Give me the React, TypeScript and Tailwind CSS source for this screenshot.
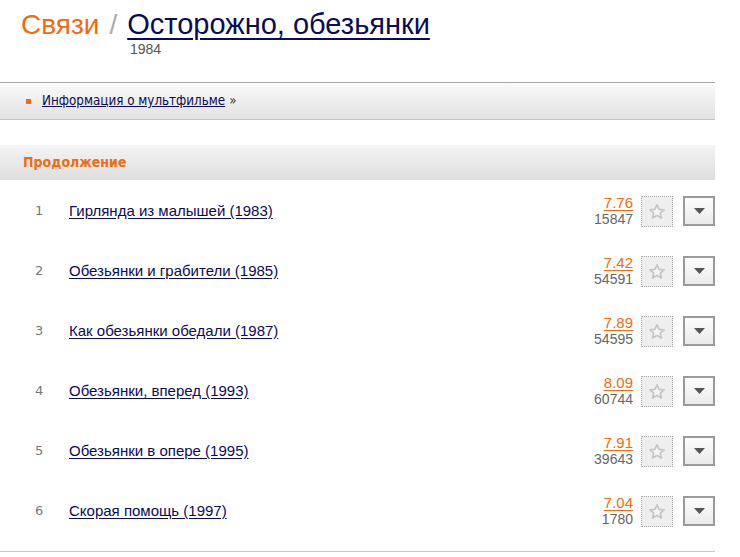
const rows = [
  { n: 1, title: "Гирлянда из малышей (1983)", rating: "7.76", votes: "15847" },
  { n: 2, title: "Обезьянки и грабители (1985)", rating: "7.42", votes: "54591" },
  { n: 3, title: "Как обезьянки обедали (1987)", rating: "7.89", votes: "54595" },
  { n: 4, title: "Обезьянки, вперед (1993)", rating: "8.09", votes: "60744" },
  { n: 5, title: "Обезьянки в опере (1995)", rating: "7.91", votes: "39643" },
  { n: 6, title: "Скорая помощь (1997)", rating: "7.04", votes: "1780" },
];

export default function App() {
  return (
    <div className="w-[740px] h-[557px] bg-white overflow-hidden font-['Liberation_Sans',Arial,sans-serif]">
      {/* Header */}
      <div className="pl-[21px] pt-[6px] h-[82px]">
        <div className="flex items-baseline leading-[36px]">
          <span className="text-[28px] text-[#f26b0f]">Связи</span>
          <span className="text-[28px] text-[#aaa] mx-[10px]">/</span>
          <a href="#" className="text-[29px] text-[#0b0b5a] underline decoration-[2px] underline-offset-[4px]">
            Осторожно, обезьянки
          </a>
        </div>
        <div className="pl-[109px] text-[14px] leading-[13px] text-[#555]">1984</div>
      </div>

      {/* Info bar */}
      <div className="w-[715px] h-[38px] border-t border-b border-t-[#a8a8a8] border-b-[#c4c4c4] bg-gradient-to-b from-[#fafafa] to-[#e2e2e2] flex items-center pl-[26px]">
        <span className="w-[5px] h-[5px] bg-[#f26b0f] mr-[11px]" />
        <a href="#" className="text-[13.3px] text-[#0b0b5a] underline font-['DejaVu_Sans_Condensed','DejaVu_Sans',sans-serif]">
          Информация о мультфильме
        </a>
        <span className="text-[13.3px] text-[#333] ml-[4px] font-['DejaVu_Sans_Condensed','DejaVu_Sans',sans-serif]">»</span>
      </div>

      {/* Section header */}
      <div className="mt-[25px] w-[715px] h-[35px] bg-gradient-to-b from-[#f4f4f4] to-[#dedede] flex items-center pl-[23px]">
        <span className="text-[14px] font-bold text-[#f26b0f] font-['DejaVu_Sans_Condensed','DejaVu_Sans',sans-serif]">Продолжение</span>
      </div>

      {/* Rows */}
      <div className="w-[715px] pt-[1px]">
        {rows.map((r) => (
          <div key={r.n} className="h-[60px] flex items-center">
            <span className="w-[69px] pl-[35px] text-[13px] text-[#777] font-['DejaVu_Sans',sans-serif]">{r.n}</span>
            <a href="#" className="flex-1 text-[15px] text-[#0b0b5a] underline underline-offset-[2px]">
              {r.title}
            </a>
            <div className="flex flex-col items-end mr-[8px]">
              <a href="#" className="text-[15px] leading-[16px] text-[#f26b0f] underline underline-offset-[2px]">{r.rating}</a>
              <span className="text-[14px] leading-[16px] text-[#666]">{r.votes}</span>
            </div>
            <div className="w-[32px] h-[31px] border border-dotted border-[#aaa] bg-[#eeeeee] flex items-center justify-center mr-[10px]">
              <svg width="18" height="17" viewBox="0 0 24 23">
                <path
                  d="M12 2.5l2.8 6.2 6.7.6-5.1 4.4 1.6 6.6L12 16.8l-6 3.5 1.6-6.6-5.1-4.4 6.7-.6z"
                  fill="#f4f4f4"
                  stroke="#c4c4c4"
                  strokeWidth="2.2"
                  strokeLinejoin="round"
                />
              </svg>
            </div>
            <div className="w-[32px] h-[30px] border-2 border-[#9a9a9a] bg-gradient-to-b from-[#fdfdfd] to-[#ebebeb] flex items-center justify-center">
              <svg width="11" height="6" viewBox="0 0 11 6">
                <path d="M0 0h11L5.5 6z" fill="#555" />
              </svg>
            </div>
          </div>
        ))}
      </div>
      <div className="mt-[10px] w-[715px] border-t border-[#c8c8c8]" />
    </div>
  );
}
